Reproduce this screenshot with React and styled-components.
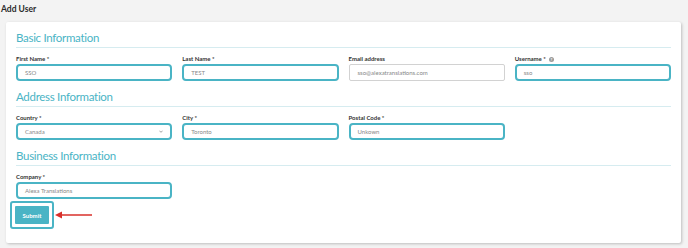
import styled, { createGlobalStyle } from 'styled-components';

const GlobalStyle = createGlobalStyle`
    body {
        margin: 0;
        background: #f3f3f3;
        font-family: Lato, 'Open Sans', sans-serif;
        color: #333;
    }
`;

const Page = styled.div`
    width: 688px;
    height: 248px;
    padding: 4px 0 0 1px;
    box-sizing: border-box;
    overflow: hidden;
`;

const Title = styled.h1`
    margin: 0;
    font-size: 8.5px;
    line-height: 10px;
    font-weight: 700;
    color: #2b2b2b;
`;

const Card = styled.div`
    margin: 8px 0 0 5px;
    width: 675px;
    box-sizing: border-box;
    background: #fff;
    padding: 9px 10px 14px;
    box-shadow: 1px 1px 3px rgba(0, 0, 0, 0.22);
    border-radius: 2px;
`;

const SectionTitle = styled.h2`
    margin: ${(p) => (p.first ? '0' : '9px')} 0 0;
    font-size: 11.5px;
    line-height: 14px;
    font-weight: 400;
    letter-spacing: -0.3px;
    color: #4ab4c5;
    padding-bottom: 2px;
    border-bottom: 1px solid #d6ecf0;
`;

const Row = styled.div`
    display: grid;
    grid-template-columns: repeat(4, 1fr);
    column-gap: 10px;
    margin-top: 7px;
`;

const Field = styled.div`
    display: flex;
    flex-direction: column;
    gap: 1px;
`;

const Label = styled.label`
    display: flex;
    align-items: center;
    gap: 3px;
    font-size: 6px;
    line-height: 8px;
    font-weight: 700;
    color: #333;
`;

const Help = styled.span`
    width: 5px;
    height: 5px;
    border-radius: 50%;
    background: #9a9a9a;
    color: #fff;
    font-size: 4px;
    line-height: 5px;
    text-align: center;
`;

const Input = styled.div`
    height: 17px;
    box-sizing: border-box;
    display: flex;
    align-items: center;
    justify-content: space-between;
    padding: 0 ${(p) => (p.plain ? '8px' : '7px')};
    border: ${(p) => (p.plain ? '1px solid #d2d2d2' : '2px solid #4ab4c5')};
    border-radius: ${(p) => (p.plain ? '2px' : '4px')};
    font-size: 6px;
    color: #888;
    background: #fff;
`;

const Chevron = styled.svg`
    width: 4px;
    height: 3px;
`;

const Actions = styled.div`
    display: flex;
    align-items: center;
    gap: 1px;
    margin: 2px 0 0 -6px;
`;

const Highlight = styled.div`
    border: 2px solid #4ab4c5;
    border-radius: 3px;
    padding: 3px;
`;

const Submit = styled.button`
    display: block;
    width: 34px;
    height: 18px;
    border: none;
    border-radius: 1px;
    background: #4ab4c5;
    color: #fff;
    font-family: inherit;
    font-size: 6px;
    font-weight: 700;
    padding: 0;
`;

const Arrow = styled.svg`
    width: 37px;
    height: 8px;
`;

const sections = [
    {
        title: 'Basic Information',
        fields: [
            { label: 'First Name *', value: 'SSO' },
            { label: 'Last Name *', value: 'TEST' },
            { label: 'Email address', value: 'sso@alexatranslations.com', plain: true },
            { label: 'Username *', value: 'sso', help: true },
        ],
    },
    {
        title: 'Address Information',
        fields: [
            { label: 'Country *', value: 'Canada', select: true },
            { label: 'City *', value: 'Toronto' },
            { label: 'Postal Code *', value: 'Unkown' },
        ],
    },
    {
        title: 'Business Information',
        fields: [{ label: 'Company *', value: 'Alexa Translations' }],
    },
];

export default function App() {
    return (
        <Page>
            <GlobalStyle />
            <Title>Add User</Title>
            <Card>
                {sections.map((s, i) => (
                    <div key={s.title}>
                        <SectionTitle first={i === 0}>{s.title}</SectionTitle>
                        <Row>
                            {s.fields.map((f) => (
                                <Field key={f.label}>
                                    <Label>
                                        {f.label}
                                        {f.help && <Help>?</Help>}
                                    </Label>
                                    <Input plain={f.plain}>
                                        {f.value}
                                        {f.select && (
                                            <Chevron viewBox="0 0 10 6">
                                                <path d="M1 1l4 4 4-4" fill="none" stroke="#666" strokeWidth="1.5" />
                                            </Chevron>
                                        )}
                                    </Input>
                                </Field>
                            ))}
                        </Row>
                    </div>
                ))}
                <Actions>
                    <Highlight>
                        <Submit>Submit</Submit>
                    </Highlight>
                    <Arrow viewBox="0 0 37 8">
                        <path d="M6 4h31" stroke="#d8302b" strokeWidth="1.5" />
                        <path d="M0 4l7-3.5v7z" fill="#d8302b" />
                    </Arrow>
                </Actions>
            </Card>
        </Page>
    );
}
